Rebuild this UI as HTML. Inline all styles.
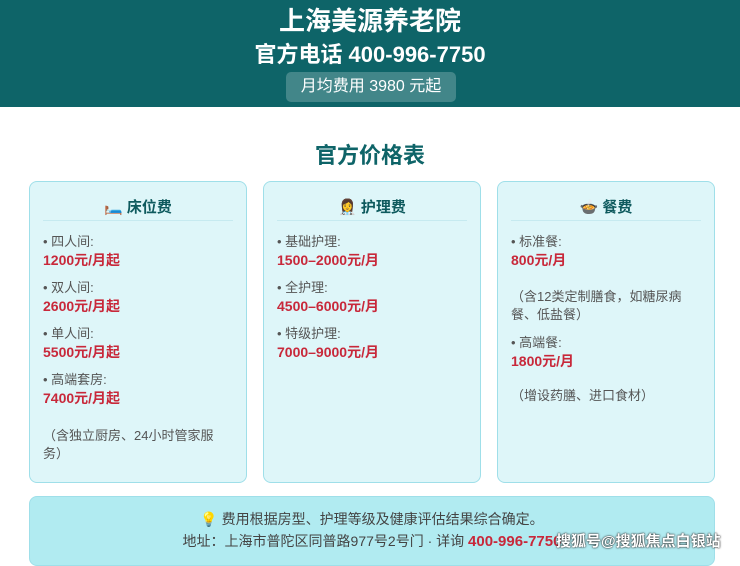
<!DOCTYPE html>
<html><head><meta charset="utf-8"><style>
*{margin:0;padding:0;box-sizing:border-box}
body{width:740px;height:555px;overflow:hidden;background:#fff;font-family:"Liberation Sans","Noto Sans CJK SC",sans-serif;position:relative}
.hd{position:absolute;left:0;top:0;width:740px;height:107px;background:#0e6468;color:#fff;text-align:center}
.t1{position:absolute;top:1px;width:100%;font-size:26px;font-weight:bold}
.t2{position:absolute;top:37px;width:100%;font-size:22px;font-weight:bold}
.pill{position:absolute;left:286px;top:72px;width:170px;height:30px;border-radius:5px;background:rgba(255,255,255,.22);font-size:16px;line-height:30px}
.h2{position:absolute;top:138px;width:100%;text-align:center;font-size:22px;font-weight:bold;color:#0e6468}
.card{position:absolute;top:181px;width:218px;height:302px;background:#def6f9;border:1px solid #9fdfe9;border-radius:8px}
.ct{position:absolute;top:14px;left:0;width:100%;text-align:center;font-size:15px;font-weight:bold;color:#0e5a5e}
.ln{position:absolute;left:13px;right:13px;top:38px;border-top:1px solid #c6eaf0}
.it{position:absolute;left:13px;font-size:13px;color:#555;line-height:18px}
.pr{position:absolute;left:13px;font-size:14px;font-weight:bold;color:#c8283a}
.ft{position:absolute;left:29px;top:496px;width:686px;height:70px;background:#b1ebf1;border:1px solid #9fdfe9;border-radius:8px;text-align:center;font-size:14px;color:#444}
</style></head><body>
<div class="hd">
<div class="t1">上海美源养老院</div>
<div class="t2">官方电话 400-996-7750</div>
<div class="pill">月均费用 3980 元起</div>
</div>
<div class="h2">官方价格表</div>

<div class="card" style="left:29px">
<div class="ct">🛏️ 床位费</div><div class="ln"></div>
<div class="it" style="top:51px">• 四人间:</div><div class="pr" style="top:68px">1200元/月起</div>
<div class="it" style="top:97px">• 双人间:</div><div class="pr" style="top:114px">2600元/月起</div>
<div class="it" style="top:143px">• 单人间:</div><div class="pr" style="top:160px">5500元/月起</div>
<div class="it" style="top:189px">• 高端套房:</div><div class="pr" style="top:206px">7400元/月起</div>
<div class="it" style="top:245px;width:186px">（含独立厨房、24小时管家服务）</div>
</div>

<div class="card" style="left:263px">
<div class="ct">👩‍⚕️ 护理费</div><div class="ln"></div>
<div class="it" style="top:51px">• 基础护理:</div><div class="pr" style="top:68px">1500–2000元/月</div>
<div class="it" style="top:97px">• 全护理:</div><div class="pr" style="top:114px">4500–6000元/月</div>
<div class="it" style="top:143px">• 特级护理:</div><div class="pr" style="top:160px">7000–9000元/月</div>
</div>

<div class="card" style="left:497px">
<div class="ct">🍲 餐费</div><div class="ln"></div>
<div class="it" style="top:51px">• 标准餐:</div><div class="pr" style="top:68px">800元/月</div>
<div class="it" style="top:106px;right:12px">（含12类定制膳食，如糖尿病餐、低盐餐）</div>
<div class="it" style="top:152px">• 高端餐:</div><div class="pr" style="top:169px">1800元/月</div>
<div class="it" style="top:205px">（增设药膳、进口食材）</div>
</div>

<div class="ft">
<div style="margin-top:12px">💡 费用根据房型、护理等级及健康评估结果综合确定。</div>
<div style="margin-top:2px">地址：上海市普陀区同普路977号2号门 · 详询 <b style="color:#c8283a;font-size:15px">400-996-7750</b></div>
</div>
<div style="position:absolute;left:556px;top:530px;font-size:15px;color:#fff;font-weight:bold;text-shadow:0 0 2px #222,0 0 1px #222">搜狐号@搜狐焦点白银站</div>
</body></html>
